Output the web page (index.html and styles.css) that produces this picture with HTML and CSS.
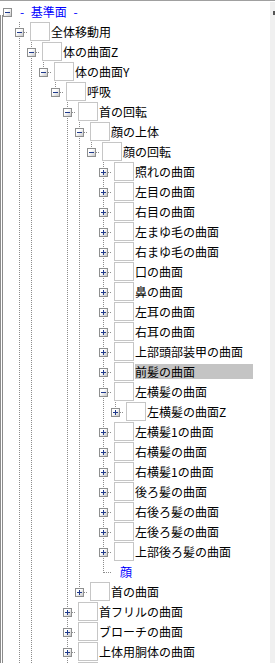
FILE: index.html
```html
<!DOCTYPE html>
<html lang="ja">
<head>
<meta charset="utf-8">
<title>Tree</title>
<link rel="stylesheet" href="styles.css">
</head>
<body>
<div class="panel">
  <div class="edge"></div>
  <div class="tree">
    <ul>
      <li class="node top">
        <div class="row"><span class="exp minus"></span><span class="label blue rootlabel">- 基準面 -</span></div>
        <ul>
          <li class="node">
            <div class="row"><span class="exp minus"></span><span class="sq"></span><span class="label">全体移動用</span></div>
            <ul>
              <li class="node">
                <div class="row"><span class="exp minus"></span><span class="sq"></span><span class="label">体の曲面Z</span></div>
                <ul>
                  <li class="node last">
                    <div class="row"><span class="exp minus"></span><span class="sq"></span><span class="label">体の曲面Y</span></div>
                    <ul>
                      <li class="node last">
                        <div class="row"><span class="exp minus"></span><span class="sq"></span><span class="label">呼吸</span></div>
                        <ul>
                          <li class="node">
                            <div class="row"><span class="exp minus"></span><span class="sq"></span><span class="label">首の回転</span></div>
                            <ul>
                              <li class="node">
                                <div class="row"><span class="exp minus"></span><span class="sq"></span><span class="label">顔の上体</span></div>
                                <ul>
                                  <li class="node last">
                                    <div class="row"><span class="exp minus"></span><span class="sq"></span><span class="label">顔の回転</span></div>
                                    <ul>
                                      <li class="node"><div class="row"><span class="exp plus"></span><span class="sq"></span><span class="label">照れの曲面</span></div></li>
                                      <li class="node"><div class="row"><span class="exp plus"></span><span class="sq"></span><span class="label">左目の曲面</span></div></li>
                                      <li class="node"><div class="row"><span class="exp plus"></span><span class="sq"></span><span class="label">右目の曲面</span></div></li>
                                      <li class="node"><div class="row"><span class="exp plus"></span><span class="sq"></span><span class="label">左まゆ毛の曲面</span></div></li>
                                      <li class="node"><div class="row"><span class="exp plus"></span><span class="sq"></span><span class="label">右まゆ毛の曲面</span></div></li>
                                      <li class="node"><div class="row"><span class="exp plus"></span><span class="sq"></span><span class="label">口の曲面</span></div></li>
                                      <li class="node"><div class="row"><span class="exp plus"></span><span class="sq"></span><span class="label">鼻の曲面</span></div></li>
                                      <li class="node"><div class="row"><span class="exp plus"></span><span class="sq"></span><span class="label">左耳の曲面</span></div></li>
                                      <li class="node"><div class="row"><span class="exp plus"></span><span class="sq"></span><span class="label">右耳の曲面</span></div></li>
                                      <li class="node"><div class="row"><span class="exp plus"></span><span class="sq"></span><span class="label">上部頭部装甲の曲面</span></div></li>
                                      <li class="node"><div class="row"><span class="exp plus"></span><span class="sq"></span><span class="label sel">前髪の曲面</span></div></li>
                                      <li class="node">
                                        <div class="row"><span class="exp minus"></span><span class="sq"></span><span class="label">左横髪の曲面</span></div>
                                        <ul>
                                          <li class="node last"><div class="row"><span class="exp plus"></span><span class="sq"></span><span class="label">左横髪の曲面Z</span></div></li>
                                        </ul>
                                      </li>
                                      <li class="node"><div class="row"><span class="exp plus"></span><span class="sq"></span><span class="label">左横髪1の曲面</span></div></li>
                                      <li class="node"><div class="row"><span class="exp plus"></span><span class="sq"></span><span class="label">右横髪の曲面</span></div></li>
                                      <li class="node"><div class="row"><span class="exp plus"></span><span class="sq"></span><span class="label">右横髪1の曲面</span></div></li>
                                      <li class="node"><div class="row"><span class="exp plus"></span><span class="sq"></span><span class="label">後ろ髪の曲面</span></div></li>
                                      <li class="node"><div class="row"><span class="exp plus"></span><span class="sq"></span><span class="label">右後ろ髪の曲面</span></div></li>
                                      <li class="node"><div class="row"><span class="exp plus"></span><span class="sq"></span><span class="label">左後ろ髪の曲面</span></div></li>
                                      <li class="node"><div class="row"><span class="exp plus"></span><span class="sq"></span><span class="label">上部後ろ髪の曲面</span></div></li>
                                      <li class="node last"><div class="row"><span class="gap"></span><span class="label blue facelabel">顔</span></div></li>
                                    </ul>
                                  </li>
                                </ul>
                              </li>
                              <li class="node last"><div class="row"><span class="exp plus"></span><span class="sq"></span><span class="label">首の曲面</span></div></li>
                            </ul>
                          </li>
                          <li class="node"><div class="row"><span class="exp plus"></span><span class="sq"></span><span class="label">首フリルの曲面</span></div></li>
                          <li class="node"><div class="row"><span class="exp plus"></span><span class="sq"></span><span class="label">ブローチの曲面</span></div></li>
                          <li class="node"><div class="row"><span class="exp plus"></span><span class="sq"></span><span class="label">上体用胴体の曲面</span></div></li>
                          <li class="node"><div class="row"><span class="exp plus"></span><span class="sq"></span><span class="label"></span></div></li>
                        </ul>
                      </li>
                    </ul>
                  </li>
                </ul>
              </li>
            </ul>
          </li>
        </ul>
      </li>
    </ul>
  </div>
  <div class="scroll"><span class="mark"></span></div>
</div>
</body>
</html>
```

FILE: styles.css
```css
html, body {
  margin: 0;
  height: 663px;
  overflow: hidden;
  background: #fff;
}
body {
  font-family: "Noto Sans CJK JP", "Noto Sans", sans-serif;
  font-size: 12px;
  color: #000;
}
.panel {
  display: flex;
  height: 662px;
  border-top: 1px solid #a0a0a0;
}
.edge {
  flex: none;
  width: 1px;
  margin-top: 14px;
  border-left: 1px solid #8c8c8c;
  border-right: 1px solid #8c8c8c;
}
.tree {
  flex: 1;
  padding-top: 1px;
  overflow: hidden;
}
.scroll {
  flex: none;
  width: 5px;
  margin-top: 1px;
  padding-top: 9px;
  background: #f0f0f0;
  display: flex;
  justify-content: flex-end;
  align-items: flex-start;
}
.mark {
  width: 2px;
  height: 4px;
  background: #555;
}
ul {
  list-style: none;
  margin: 0;
  padding: 0;
}
li ul {
  padding-left: 12px;
}
.node {
  background: repeating-linear-gradient(to bottom, #8c8c8c 0 1px, transparent 1px 2px) 4px 0 / 1px 100% no-repeat;
}
.node.last {
  background-size: 1px 11px;
}
.node.top {
  background: none;
}
.row {
  display: flex;
  align-items: flex-start;
  height: 20px;
  background: repeating-linear-gradient(to right, #8c8c8c 0 1px, transparent 1px 2px) 5px 10px / 8px 1px no-repeat;
}
.top > .row {
  background: none;
}
.exp {
  flex: none;
  width: 9px;
  height: 9px;
  box-sizing: border-box;
  margin-top: 6px;
  border: 1px solid #8e8f8f;
}
.exp.minus {
  background:
    linear-gradient(#1f3a8c, #1f3a8c) 1px 3px / 5px 1px no-repeat,
    linear-gradient(135deg, #fff 0%, #fff 35%, #c8c8c8 100%);
}
.exp.plus {
  background:
    linear-gradient(#1f3a8c, #1f3a8c) 1px 3px / 5px 1px no-repeat,
    linear-gradient(#1f3a8c, #1f3a8c) 3px 1px / 1px 5px no-repeat,
    linear-gradient(135deg, #fff 0%, #fff 35%, #c8c8c8 100%);
}
.gap {
  flex: none;
  width: 9px;
}
.sq {
  flex: none;
  width: 20px;
  height: 19px;
  box-sizing: border-box;
  margin-left: 6px;
  border: 1px solid #c6c6c6;
  background: #fff;
}
.label {
  margin-left: 1px;
  margin-top: 2px;
  height: 15px;
  line-height: 15px;
  white-space: nowrap;
}
.blue {
  color: #0000ff;
}
.rootlabel {
  margin-left: 8px;
  word-spacing: 4px;
}
.facelabel {
  margin-left: 12px;
}
.sel {
  background: #c4c4c4;
  width: 118px;
}
```
